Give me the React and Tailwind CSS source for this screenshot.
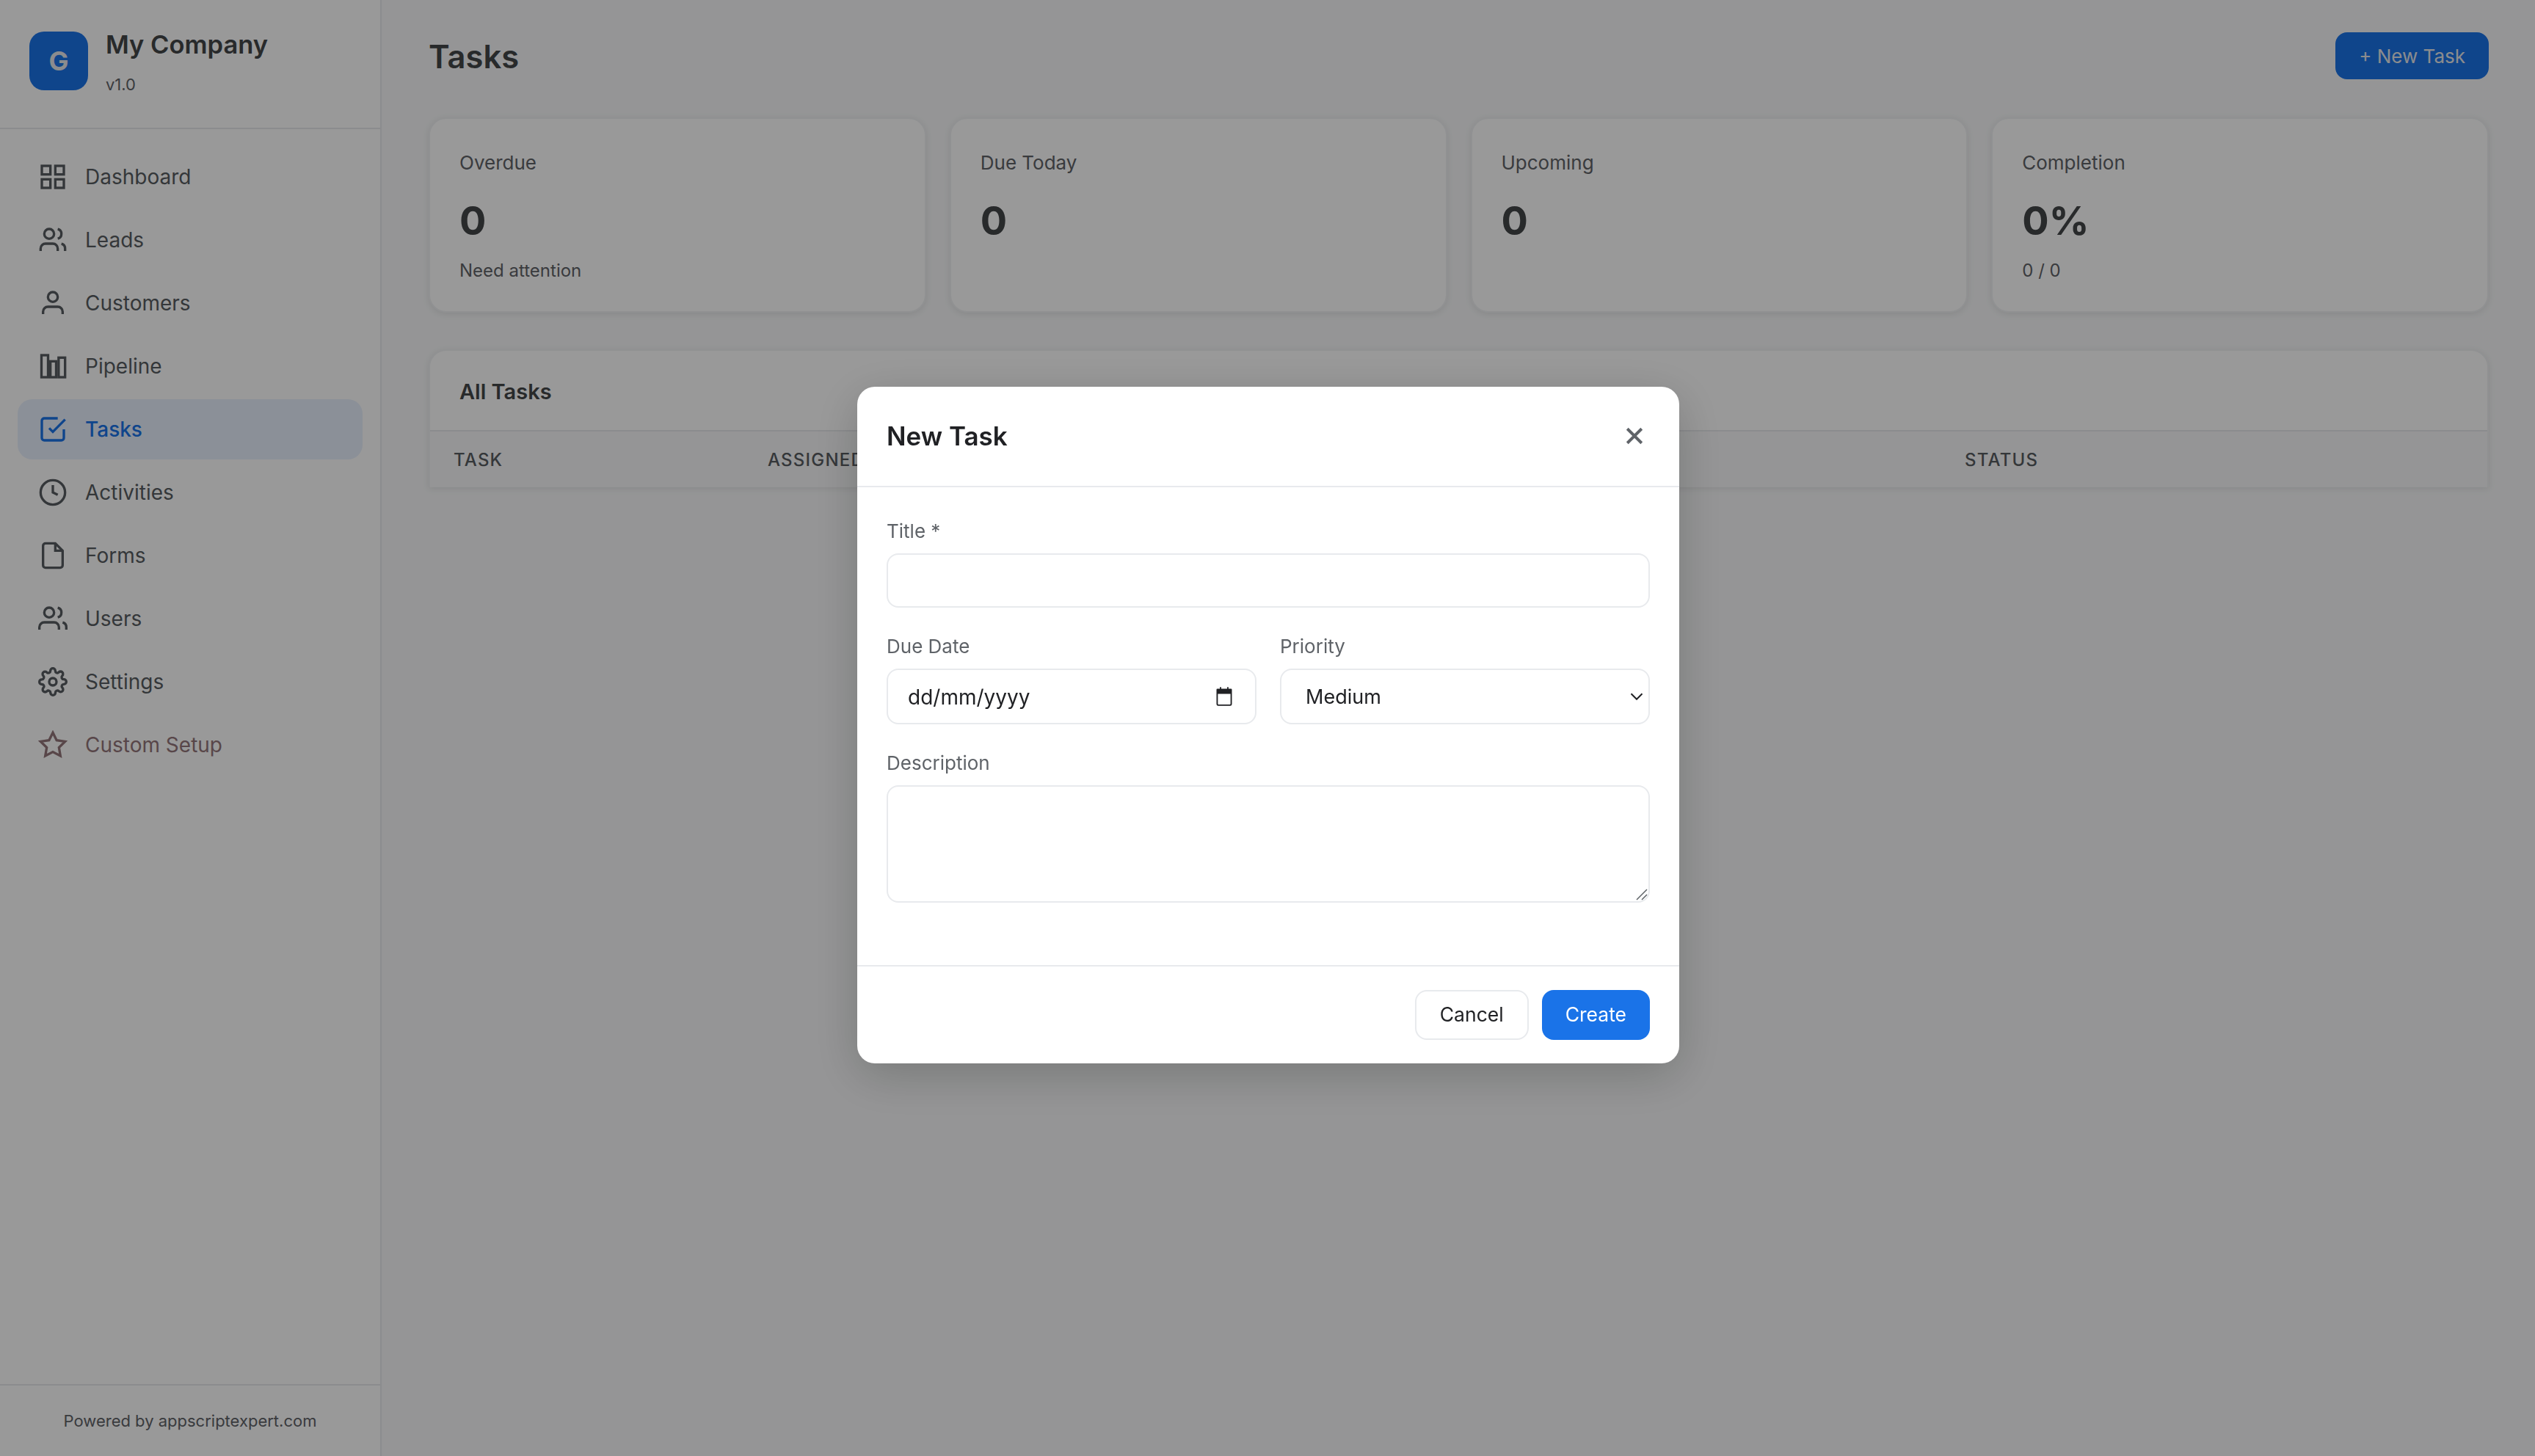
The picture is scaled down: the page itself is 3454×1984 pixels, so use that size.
import React from 'react';

const Icon = ({ children, className = 'w-10 h-10' }) => (
  <svg viewBox="0 0 24 24" fill="none" stroke="currentColor" strokeWidth={2} className={`${className} shrink-0`}>
    {children}
  </svg>
);

const navItems = [
  { label: 'Dashboard', icon: <><rect x="3" y="3" width="7" height="7" /><rect x="14" y="3" width="7" height="7" /><rect x="14" y="14" width="7" height="7" /><rect x="3" y="14" width="7" height="7" /></> },
  { label: 'Leads', icon: <><path d="M16 21v-2a4 4 0 0 0-4-4H6a4 4 0 0 0-4 4v2" /><circle cx="9" cy="7" r="4" /><path d="M22 21v-2a4 4 0 0 0-3-3.87" /><path d="M16 3.13a4 4 0 0 1 0 7.75" /></> },
  { label: 'Customers', icon: <><path d="M20 21v-2a4 4 0 0 0-4-4H8a4 4 0 0 0-4 4v2" /><circle cx="12" cy="7" r="4" /></> },
  { label: 'Pipeline', icon: <><rect x="2.7" y="3" width="5.4" height="18" /><rect x="10" y="8" width="4.7" height="13" /><rect x="16.7" y="5" width="5.3" height="16" /></> },
  { label: 'Tasks', active: true, icon: <><path d="M9 11l3 3L22 4" /><path d="M21 12v7a2 2 0 0 1-2 2H5a2 2 0 0 1-2-2V5a2 2 0 0 1 2-2h11" /></> },
  { label: 'Activities', icon: <><circle cx="12" cy="12" r="10" /><path d="M12 6v6l4 2" /></> },
  { label: 'Forms', icon: <><path d="M14 2H6a2 2 0 0 0-2 2v16a2 2 0 0 0 2 2h12a2 2 0 0 0 2-2V8z" /><path d="M14 2v6h6" /></> },
  { label: 'Users', icon: <><path d="M17 21v-2a4 4 0 0 0-4-4H5a4 4 0 0 0-4 4v2" /><circle cx="9" cy="7" r="4" /><path d="M23 21v-2a4 4 0 0 0-3-3.87" /><path d="M16 3.13a4 4 0 0 1 0 7.75" /></> },
  { label: 'Settings', icon: <><circle cx="12" cy="12" r="3" /><path d="M19.4 15a1.65 1.65 0 0 0 .33 1.82l.06.06a2 2 0 0 1 0 2.83 2 2 0 0 1-2.83 0l-.06-.06a1.65 1.65 0 0 0-1.82-.33 1.65 1.65 0 0 0-1 1.51V21a2 2 0 0 1-2 2 2 2 0 0 1-2-2v-.09A1.65 1.65 0 0 0 9 19.4a1.65 1.65 0 0 0-1.82.33l-.06.06a2 2 0 0 1-2.83 0 2 2 0 0 1 0-2.83l.06-.06a1.65 1.65 0 0 0 .33-1.82 1.65 1.65 0 0 0-1.51-1H3a2 2 0 0 1-2-2 2 2 0 0 1 2-2h.09A1.65 1.65 0 0 0 4.6 9a1.65 1.65 0 0 0-.33-1.82l-.06-.06a2 2 0 0 1 0-2.83 2 2 0 0 1 2.83 0l.06.06a1.65 1.65 0 0 0 1.82.33H9a1.65 1.65 0 0 0 1-1.51V3a2 2 0 0 1 2-2 2 2 0 0 1 2 2v.09a1.65 1.65 0 0 0 1 1.51 1.65 1.65 0 0 0 1.82-.33l.06-.06a2 2 0 0 1 2.83 0 2 2 0 0 1 0 2.83l-.06.06a1.65 1.65 0 0 0-.33 1.82V9a1.65 1.65 0 0 0 1.51 1H21a2 2 0 0 1 2 2 2 2 0 0 1-2 2h-.09a1.65 1.65 0 0 0-1.51 1z" /></> },
  { label: 'Custom Setup', custom: true, icon: <polygon points="12 2 15.09 8.26 22 9.27 17 14.14 18.18 21.02 12 17.77 5.82 21.02 7 14.14 2 9.27 8.91 8.26 12 2" /> },
];

const stats = [
  { label: 'Overdue', value: '0', sub: 'Need attention' },
  { label: 'Due Today', value: '0' },
  { label: 'Upcoming', value: '0' },
  { label: 'Completion', value: '0%', sub: '0 / 0' },
];

const Sidebar = () => (
  <aside className="w-[520px] shrink-0 bg-white border-r-2 border-[#e8eaed] flex flex-col">
    <div className="h-[176px] border-b-2 border-[#e8eaed] flex items-center gap-6 px-10 pb-2">
      <div className="w-20 h-20 rounded-[20px] bg-[#1a73e8] text-[#e8eaed] text-[36px] font-bold flex items-center justify-center">G</div>
      <div>
        <div className="text-[34.5px] leading-[50px] font-semibold text-[#444649]">My Company</div>
        <div className="text-[22px] leading-[32px] mt-[13px] text-[#5f6368]">v1.0</div>
      </div>
    </div>
    <nav className="flex-1 flex flex-col gap-1 px-6 pt-6">
      {navItems.map((item) => (
        <div
          key={item.label}
          className={`h-[82px] flex items-center gap-6 px-7 rounded-[20px] text-[28px] ${item.active ? 'bg-[#e8f0fe] text-[#1a73e8] font-medium' : item.custom ? 'text-[#93767a]' : 'text-[#585c61]'}`}
        >
          <Icon>{item.icon}</Icon>
          <span>{item.label}</span>
        </div>
      ))}
    </nav>
    <div className="h-[98px] border-t-2 border-[#e8eaed] flex items-center justify-center text-[22px] text-[#5f6368]">
      Powered by appscriptexpert.com
    </div>
  </aside>
);

const StatCard = ({ label, value, sub }) => (
  <div className="h-[266px] bg-white border-2 border-[#f1f2f4] rounded-3xl shadow-[0_2px_10px_rgba(0,0,0,0.09)] px-10 pt-[42px]">
    <div className="text-[26px] leading-9 text-[#5f6368]">{label}</div>
    <div className="text-[54px] leading-[72px] font-bold text-[#444649] mt-[25px]">{value}</div>
    {sub && <div className="text-[24px] leading-8 text-[#5f6368] mt-4">{sub}</div>}
  </div>
);

const Main = () => (
  <main className="flex-1 min-w-0 pl-16 pr-[63px] pt-11">
    <div className="flex items-center justify-between h-16">
      <h1 className="text-[43.5px] font-semibold text-[#444649] pt-1">Tasks</h1>
      <button className="h-16 px-8 rounded-2xl bg-[#1a73e8] text-[#e8eaed] text-[26px]">+ New Task</button>
    </div>
    <div className="grid grid-cols-4 gap-8 mt-[52px]">
      {stats.map((s) => <StatCard key={s.label} {...s} />)}
    </div>
    <div className="mt-[50px] bg-white border-2 border-b-0 border-[#f1f2f4] rounded-t-3xl shadow-[0_2px_10px_rgba(0,0,0,0.09)]">
      <div className="h-[110px] flex items-center px-10 pt-[3px] border-b-2 border-[#e8eaed] text-[29px] font-semibold text-[#444649]">All Tasks</div>
      <div className="h-[76px] bg-[#f8f9fa] grid grid-cols-[428px_500px_500px_631px_1fr] items-center pl-8 pt-[1px] text-[24px] font-medium tracking-[1.2px] text-[#585c61] uppercase">
        <div>Task</div>
        <div>Assigned To</div>
        <div>Due Date</div>
        <div>Priority</div>
        <div>Status</div>
      </div>
    </div>
  </main>
);

const Field = ({ label, children, className = '' }) => (
  <div className={className}>
    <label className="block text-[26px] leading-9 text-[#5f6368] mb-3">{label}</label>
    {children}
  </div>
);

const Modal = () => (
  <div className="fixed inset-0 bg-black/40 flex items-center justify-center pb-2 pl-[2px]">
    <div className="w-[1120px] h-[922px] bg-white rounded-3xl shadow-[0_16px_64px_rgba(0,0,0,0.2)] flex flex-col">
      <div className="h-[137px] shrink-0 border-b-2 border-[#e8eaed] flex items-center justify-between px-10">
        <h2 className="text-[35px] font-semibold text-[#202124]">New Task</h2>
        <button className="text-[#5f6368] mr-[8px] mb-[2px]">
          <svg viewBox="0 0 24 24" className="w-[26px] h-[26px]" fill="none" stroke="currentColor" strokeWidth={3.6}>
            <path d="M3 3l18 18M21 3L3 21" />
          </svg>
        </button>
      </div>
      <div className="flex-1 px-10 pt-[42px]">
        <Field label="Title *">
          <input className="block w-full h-[74px] border-2 border-[#e8eaed] rounded-2xl outline-none" />
        </Field>
        <div className="grid grid-cols-2 gap-8 mt-[35px]">
          <Field label="Due Date">
            <div className="h-[76px] border-2 border-[#e8eaed] rounded-2xl flex items-center justify-between pl-[27px] pr-[28px] pt-[2px] text-[28px] text-[#202124]">
              <span>dd/mm/yyyy</span>
              <svg viewBox="0 0 24 24" className="w-7 h-7 mb-[2px]" fill="#202124">
                <path fillRule="evenodd" d="M7 1h1.5v2h7V1H17v2h3a1 1 0 0 1 1 1v17a2 2 0 0 1-2 2H5a2 2 0 0 1-2-2V4a1 1 0 0 1 1-1h3zM4.6 9v11.5c0 .5.4.9.9.9h13c.5 0 .9-.4.9-.9V9z" />
              </svg>
            </div>
          </Field>
          <Field label="Priority">
            <div className="h-[76px] border-2 border-[#e8eaed] rounded-2xl flex items-center justify-between pl-[33px] pr-[6px] pt-[2px] text-[27px] text-[#202124]">
              <span>Medium</span>
              <svg viewBox="0 0 16 16" className="w-5 h-5 mb-[2px]" fill="none" stroke="#202124" strokeWidth={1.6}>
                <path d="M2 5l6 6 6-6" />
              </svg>
            </div>
          </Field>
        </div>
        <Field label="Description" className="mt-[35px]">
          <div className="relative">
            <textarea className="block w-full h-[160px] border-2 border-[#e8eaed] rounded-2xl outline-none resize-none" />
            <svg viewBox="0 0 16 16" className="absolute right-[3px] bottom-[3px] w-4 h-4" fill="none" stroke="#5f6368" strokeWidth={1.5}>
              <path d="M1 15L15 1M8 15l7-7" />
            </svg>
          </div>
        </Field>
      </div>
      <div className="h-[134px] shrink-0 border-t-2 border-[#e8eaed] flex items-center justify-end gap-[18px] px-10">
        <button className="h-[68px] px-8 border-2 border-[#e8eaed] rounded-2xl bg-white text-[26.5px] text-[#202124]">Cancel</button>
        <button className="h-[68px] px-8 rounded-2xl bg-[#1a73e8] text-[26.5px] text-white">Create</button>
      </div>
    </div>
  </div>
);

export default function App() {
  return (
    <div className="h-screen flex overflow-hidden bg-[#f8f9fa] font-['Inter',sans-serif]">
      <Sidebar />
      <Main />
      <Modal />
    </div>
  );
}
